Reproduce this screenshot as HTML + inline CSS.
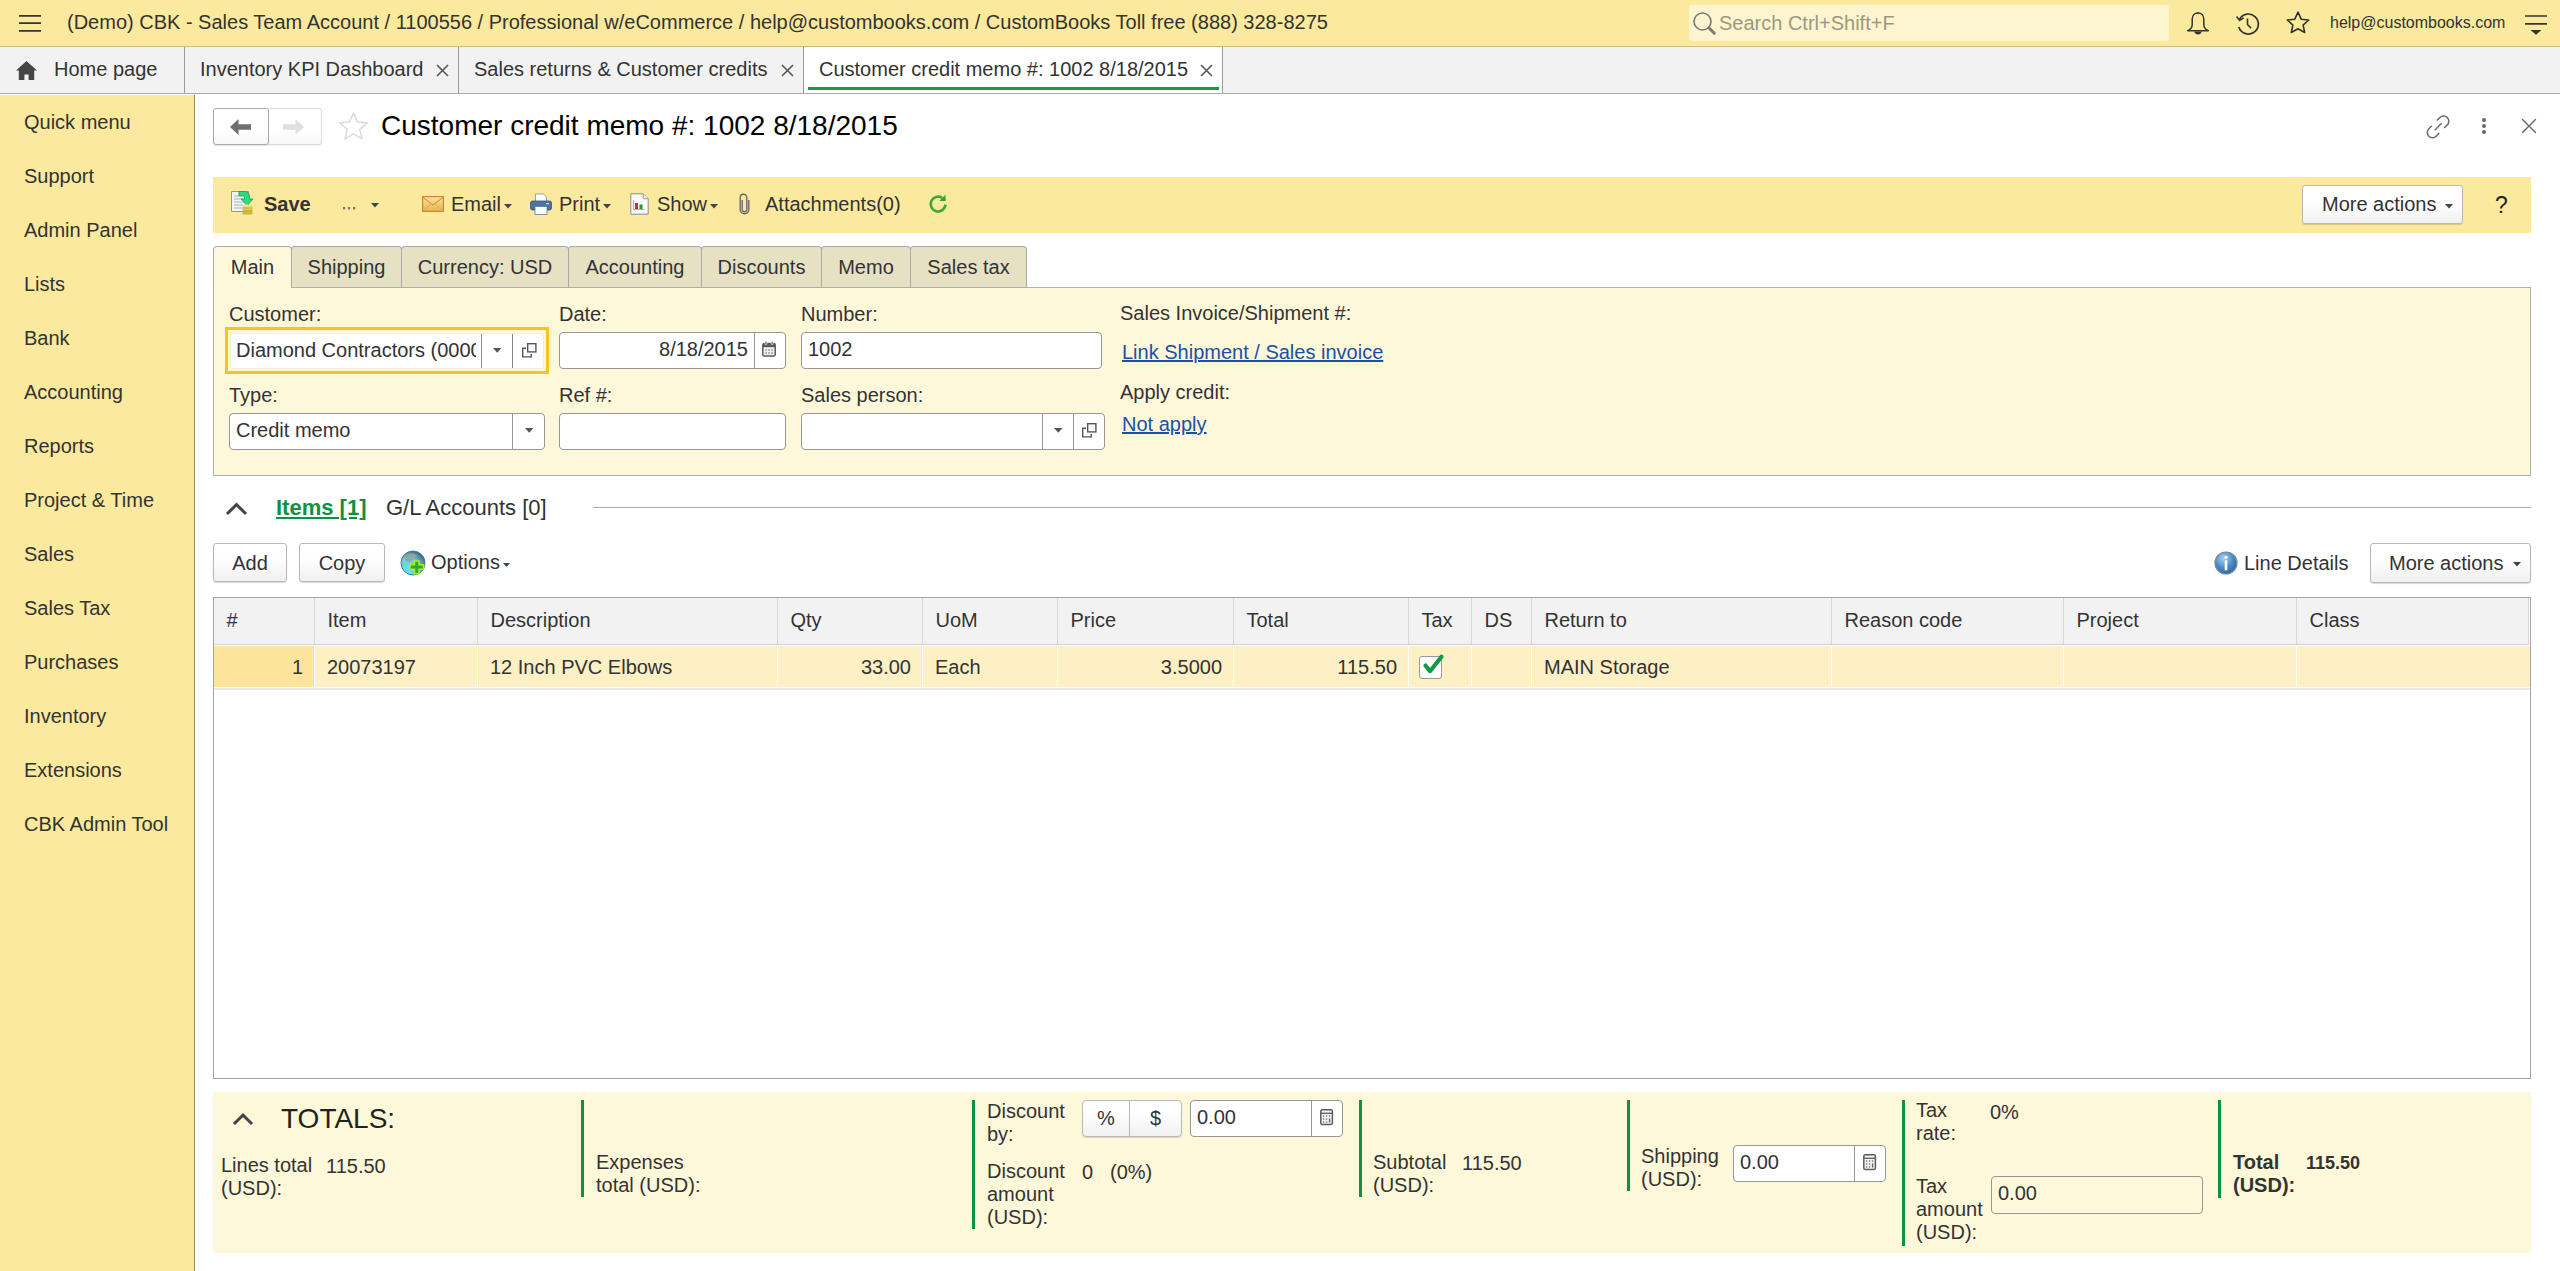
<!DOCTYPE html>
<html><head><meta charset="utf-8">
<style>
*{box-sizing:border-box;margin:0;padding:0}
html,body{width:2560px;height:1271px;overflow:hidden;background:#fff;font-family:"Liberation Sans",sans-serif;font-size:20px;color:#333}
.a{position:absolute;white-space:nowrap}
#top{position:absolute;left:0;top:0;width:2560px;height:47px;background:#fbea9e;border-bottom:1px solid #c9bb7e}
#tabs{position:absolute;left:0;top:47px;width:2560px;height:47px;background:#f2f2f2;border-bottom:1px solid #a9a9a9}
#side{position:absolute;left:0;top:95px;width:195px;height:1176px;background:#fbea9e;border-right:1px solid #948e60}
.side-item{position:absolute;left:24px;font-size:20px;color:#333;line-height:24px}
.ttab{position:absolute;top:0;height:46px;border-right:1px solid #9a9a9a;line-height:45px;font-size:20px;color:#333}
.x{font-size:22px;color:#555}
#toolbar{position:absolute;left:213px;top:177px;width:2318px;height:56px;background:#fbea9e}
.ftab{position:absolute;top:246px;height:41px;background:#e6e1c3;border:1px solid #a9a9a9;border-bottom:none;border-radius:4px 4px 0 0;line-height:41px;font-size:20px;color:#333;text-align:center}
#form{position:absolute;left:213px;top:287px;width:2318px;height:189px;background:#fef8da;border:1px solid #b0b0b0}
.lbl{position:absolute;font-size:20px;color:#333;line-height:24px}
.inp{position:absolute;background:#fff;border:1px solid #979797;border-radius:4px;height:37px;line-height:33px;font-size:20px;color:#333}
.sep{position:absolute;top:0;width:1px;height:100%;background:#979797}
.btn{position:absolute;background:linear-gradient(#fff 35%,#f0f0f0);border:1px solid #b8b8b8;border-radius:3px;box-shadow:0 1px 1px rgba(0,0,0,.15);font-size:20px;color:#333;text-align:center}
#grid{position:absolute;left:213px;top:597px;width:2318px;height:482px;border:1px solid #a6a6a6;background:#fff}
.th{position:absolute;top:0;height:47px;background:#f2f2f2;border-right:1px solid #d6d6d6;border-bottom:1px solid #d0d0d0;box-shadow:1px 0 0 #fff,0 1px 0 #fff;line-height:45px;padding-left:12.5px;font-size:20px;color:#333}
.td{position:absolute;top:48px;height:41px;background:#fdf0c5;border-right:1px solid #fff;line-height:42px;font-size:20px;color:#333}
#totals{position:absolute;left:213px;top:1092px;width:2318px;height:161px;background:#fef8da}
.gl{position:absolute;width:3px;background:#0f9142}
.tl{position:absolute;font-size:20px;color:#333;line-height:23px}
</style></head><body>

<!-- TOP BAR -->
<div id="top">
  <svg class="a" style="left:19px;top:14px" width="22" height="19" viewBox="0 0 22 19"><path d="M0 1.8h22M0 9.2h22M0 16.9h22" stroke="#333" stroke-width="1.7"/></svg>
  <div class="a" style="left:67px;top:10px;font-size:20px;color:#333;line-height:24px">(Demo) CBK - Sales Team Account / 1100556 / Professional w/eCommerce / help@custombooks.com / CustomBooks Toll free (888) 328-8275</div>
  <div class="a" style="left:1689px;top:5px;width:480px;height:36px;background:#fdf5cf;border-radius:3px"></div>
  <div class="a" style="left:1719px;font-size:20px;color:#9e9880;line-height:24px;top:11px">Search Ctrl+Shift+F</div>
  
  <svg class="a" style="left:1692px;top:11px" width="26" height="26" viewBox="0 0 26 26"><circle cx="10.5" cy="10.5" r="8.5" fill="none" stroke="#7e7b6e" stroke-width="1.6"/><path d="M16.8 16.8l5.5 5.5" stroke="#7e7b6e" stroke-width="3" stroke-linecap="round"/></svg>
  <svg class="a" style="left:2185px;top:10px" width="26" height="28" viewBox="0 0 26 28"><path d="M13 3c-3.6 0-5.8 2.6-5.8 6.3v5.5c0 2.8-1.5 4.5-4.5 5.9h20.6c-3-1.4-4.5-3.1-4.5-5.9V9.3C18.8 5.6 16.6 3 13 3z" fill="none" stroke="#333" stroke-width="1.5" stroke-linejoin="round"/><path d="M13 2v1.5" stroke="#333" stroke-width="1.5"/><path d="M9.2 21.5h7.6c-.6 2-1.9 3-3.8 3s-3.2-1-3.8-3z" fill="#333"/></svg>
  <svg class="a" style="left:2235px;top:11px" width="26" height="26" viewBox="0 0 26 26"><path d="M4.6 8.2A10 10 0 1 1 3.8 16" fill="none" stroke="#333" stroke-width="1.7"/><path d="M1.6 5.6l3 3.8 4-2.6" fill="none" stroke="#333" stroke-width="1.6"/><path d="M12.5 7.5v6l3.6 3.6" fill="none" stroke="#333" stroke-width="1.6"/></svg>
  <svg class="a" style="left:2285px;top:10px" width="26" height="26" viewBox="0 0 26 26"><path d="M13 2.2l3.2 7 7.5.8-5.6 5.1 1.6 7.4L13 18.7l-6.7 3.8 1.6-7.4L2.3 10l7.5-.8z" fill="none" stroke="#333" stroke-width="1.6" stroke-linejoin="round"/></svg>
  <div class="a" style="left:2330px;top:12px;font-size:16px;color:#333;line-height:22px">help@custombooks.com</div>
  <svg class="a" style="left:2525px;top:14px" width="22" height="22" viewBox="0 0 22 22"><path d="M0 2h22M0 9.8h22" stroke="#333" stroke-width="1.7"/><path d="M5.5 16h11l-5.5 4.8z" fill="#333"/></svg>
</div>

<!-- TAB BAR -->
<div id="tabs">
  <div class="ttab" style="left:0;width:185px"><svg class="a" style="left:16px;top:14px" width="21" height="19" viewBox="0 0 21 19"><path d="M10.5 0L0 9.5h2.8V19h5.6v-5.5h4.2V19h5.6V9.5H21z" fill="#454545"/></svg><span class="a" style="left:54px">Home page</span></div>
  <div class="ttab" style="left:185px;width:274px"><span class="a" style="left:15px">Inventory KPI Dashboard</span><svg class="a" style="left:251px;top:17px" width="13" height="13" viewBox="0 0 13 13"><path d="M1 1l11 11M12 1L1 12" stroke="#555" stroke-width="1.6"/></svg></div>
  <div class="ttab" style="left:459px;width:345px"><span class="a" style="left:15px">Sales returns &amp; Customer credits</span><svg class="a" style="left:322px;top:17px" width="13" height="13" viewBox="0 0 13 13"><path d="M1 1l11 11M12 1L1 12" stroke="#555" stroke-width="1.6"/></svg></div>
  <div class="ttab" style="left:804px;width:419px;background:#fff"><span class="a" style="left:15px">Customer credit memo #: 1002 8/18/2015</span><svg class="a" style="left:396px;top:17px" width="13" height="13" viewBox="0 0 13 13"><path d="M1 1l11 11M12 1L1 12" stroke="#555" stroke-width="1.6"/></svg>
    <div class="a" style="left:4px;top:40px;width:411px;height:3px;background:#0e9c44"></div></div>
</div>

<!-- SIDEBAR -->
<div id="side">
  <div class="side-item" style="top:15px">Quick menu</div>
  <div class="side-item" style="top:69px">Support</div>
  <div class="side-item" style="top:123px">Admin Panel</div>
  <div class="side-item" style="top:177px">Lists</div>
  <div class="side-item" style="top:231px">Bank</div>
  <div class="side-item" style="top:285px">Accounting</div>
  <div class="side-item" style="top:339px">Reports</div>
  <div class="side-item" style="top:393px">Project &amp; Time</div>
  <div class="side-item" style="top:447px">Sales</div>
  <div class="side-item" style="top:501px">Sales Tax</div>
  <div class="side-item" style="top:555px">Purchases</div>
  <div class="side-item" style="top:609px">Inventory</div>
  <div class="side-item" style="top:663px">Extensions</div>
  <div class="side-item" style="top:717px">CBK Admin Tool</div>
</div>


<!-- NAV -->
<div class="a" style="left:268px;top:108px;width:54px;height:37px;background:linear-gradient(#fff 60%,#f8f8f8);border:1px solid #dcdcdc;border-left:none;border-radius:0 3px 3px 0;box-shadow:0 1px 1px rgba(0,0,0,.06)"></div>
<div class="a" style="left:213px;top:108px;width:56px;height:37px;background:linear-gradient(#fff 60%,#f6f6f6);border:1px solid #aaa;border-radius:3px;box-shadow:0 1px 1px rgba(0,0,0,.12)"></div>
<svg class="a" style="left:230px;top:118px" width="22" height="18" viewBox="0 0 22 18"><path d="M0 9l8.5-8v5.3H21v5.4H8.5V17z" fill="#6f6f6f"/></svg>
<svg class="a" style="left:283px;top:118px" width="22" height="18" viewBox="0 0 22 18"><path d="M21 9l-8.5-8v5.3H0v5.4h12.5V17z" fill="#e0e0e0"/></svg>
<svg class="a" style="left:338px;top:111px" width="31" height="31" viewBox="0 0 31 31"><path d="M15.5 2.2l4 8.8 9.6.9-7.3 6.5 2.2 9.5-8.5-5-8.5 5 2.2-9.5L1.9 11.9l9.6-.9z" fill="none" stroke="#dcdcdc" stroke-width="1.6" stroke-linejoin="round"/></svg>
<!-- right window icons -->
<svg class="a" style="left:2424px;top:112px" width="28" height="28" viewBox="0 0 28 28"><g fill="none" stroke="#6a6a6a" stroke-width="1.5"><path d="M10.7 18.3L17.6 11.25"/><path d="M12.88 8.56L15.92 5.52A5.2 5.2 0 0 1 23.28 12.88L20.24 15.92"/><path d="M15.22 21.14L12.18 24.18A5.2 5.2 0 0 1 4.82 16.82L7.86 13.78"/></g></svg>
<svg class="a" style="left:2480px;top:116px" width="8" height="20" viewBox="0 0 8 20"><circle cx="4" cy="4" r="2" fill="#666"/><circle cx="4" cy="10" r="2" fill="#666"/><circle cx="4" cy="16" r="2" fill="#666"/></svg>
<svg class="a" style="left:2521px;top:118px" width="16" height="16" viewBox="0 0 16 16"><path d="M1.5 1.5l13 13M14.5 1.5l-13 13" stroke="#666" stroke-width="1.4" stroke-linecap="round"/></svg>
<!-- TITLE -->
<div class="a" style="left:381px;top:110px;font-size:28px;color:#000;line-height:32px">Customer credit memo #: 1002 8/18/2015</div>

<!-- TOOLBAR -->
<div id="toolbar">
  <svg class="a" style="left:17px;top:13px" width="28" height="26" viewBox="0 0 28 26"><defs><linearGradient id="cg" x1="0" x2="0" y1="0" y2="1"><stop offset="0" stop-color="#f4ec90"/><stop offset="1" stop-color="#c9b030"/></linearGradient></defs><path d="M1.5 1.5h17v20h-17z" fill="#f2f4f6" stroke="#8896a4"/><path d="M4 6h8M4 9h9M4 12h9M4 15h9M4 18h8" stroke="#a6b4c0" stroke-width="1"/><path d="M9 1.5h5c3.5 0 5.5 2 5.5 5.5v2H23l-6 6.5-6-6.5h3.5V7c0-.8-.4-1.2-1.2-1.2H9z" fill="#2edb80" stroke="#17a858" stroke-width=".9"/><rect x="12.5" y="14.5" width="10" height="10" rx="1" fill="url(#cg)"/><path d="M12.5 18h10M12.5 21h10" stroke="#b79d20" stroke-width=".8"/></svg>
  <div class="a" style="left:51px;top:15px;font-weight:bold;font-size:20px;color:#333;line-height:24px">Save</div>
  <svg class="a" style="left:130px;top:30px" width="14" height="4"><rect x="0" y="0" width="2.2" height="2.4" fill="#777"/><rect x="5" y="0" width="2.2" height="2.4" fill="#777"/><rect x="10" y="0" width="2.2" height="2.4" fill="#777"/></svg>
  <svg class="a" style="left:158px;top:26px" width="9" height="5"><path d="M0 0h8l-4 4.5z" fill="#444"/></svg>
  <svg class="a" style="left:209px;top:19px" width="22" height="16" viewBox="0 0 22 16"><defs><linearGradient id="eg" x1="0" x2="0" y1="0" y2="1"><stop offset="0" stop-color="#fbe2a0"/><stop offset="1" stop-color="#e8b34e"/></linearGradient></defs><rect x=".6" y=".6" width="20.8" height="14.8" fill="url(#eg)" stroke="#c88a2a" stroke-width="1.2"/><path d="M1 1.5l10 7.5 10-7.5" fill="none" stroke="#c88a2a" stroke-width="1"/><path d="M1 15l7.5-6.5M21 15l-7.5-6.5" stroke="#e0a848" stroke-width=".8"/></svg>
  <div class="a" style="left:238px;top:15px;font-size:20px;color:#333;line-height:24px">Email</div>
  <svg class="a" style="left:291px;top:27px" width="9" height="5"><path d="M0 0h8l-4 4.5z" fill="#444"/></svg>
  <svg class="a" style="left:317px;top:16px" width="22" height="22" viewBox="0 0 22 22"><path d="M5.5 1h8l3 3v5h-11z" fill="#fff" stroke="#7b8fa5" stroke-width=".8"/><rect x=".5" y="8" width="21" height="9" rx="2" fill="#4d73a3" stroke="#2f5482" stroke-width=".8"/><rect x="16" y="10" width="3" height="1.2" fill="#c8d8ea"/><path d="M5 13.5h12v8H5z" fill="#fff" stroke="#5a7696" stroke-width=".8"/></svg>
  <div class="a" style="left:346px;top:15px;font-size:20px;color:#333;line-height:24px">Print</div>
  <svg class="a" style="left:390px;top:27px" width="9" height="5"><path d="M0 0h8l-4 4.5z" fill="#444"/></svg>
  <svg class="a" style="left:417px;top:16px" width="19" height="22" viewBox="0 0 19 22"><path d="M.8 .8h12.5l4.9 4.9v15.5H.8z" fill="#fafafa" stroke="#8c8c8c" stroke-width="1"/><path d="M13.3 .8v4.9h4.9" fill="#e8e8e8" stroke="#8c8c8c" stroke-width=".8"/><path d="M3.5 7v9.5h11" fill="none" stroke="#9a9a9a" stroke-width=".8"/><rect x="5" y="10" width="3" height="6" fill="#e8261c"/><rect x="9.5" y="11.5" width="3" height="4.5" fill="#1ea030"/></svg>
  <div class="a" style="left:444px;top:15px;font-size:20px;color:#333;line-height:24px">Show</div>
  <svg class="a" style="left:497px;top:27px" width="9" height="5"><path d="M0 0h8l-4 4.5z" fill="#444"/></svg>
  <svg class="a" style="left:526px;top:16px" width="11" height="22" viewBox="0 0 11 22"><path d="M3.2 7v9.5a2.3 2.3 0 0 0 4.6 0V4.5a3.3 3.3 0 0 0-6.6 0v12a4.3 4.3 0 0 0 8.6 0V7" fill="none" stroke="#6a6a6a" stroke-width="1.4"/></svg>
  <div class="a" style="left:552px;top:15px;font-size:20px;color:#333;line-height:24px">Attachments(0)</div>
  <svg class="a" style="left:715px;top:17px" width="22" height="22" viewBox="0 0 22 22"><path d="M17.47 10.74A7.4 7.4 0 1 1 14.2 3.9" fill="none" stroke="#3daa38" stroke-width="2.7"/><path d="M11.4 6.9h6.3L17.4 .8z" fill="#2ea52a"/></svg>
  <div class="btn" style="left:2089px;top:8px;width:161px;height:39px;line-height:36px;text-align:left;padding-left:19px;background:linear-gradient(#fff 40%,#f1f1f1)">More actions<svg class="a" style="left:142px;top:18px" width="9" height="5"><path d="M0 0h8l-4 4.5z" fill="#444"/></svg></div>
  <div class="a" style="left:2282px;top:15px;font-size:23px;color:#222;line-height:26px">?</div>
</div>

<!-- FORM -->
<div id="form">
  <div class="lbl" style="left:15px;top:14px">Customer:</div>
  <div class="a" style="left:11px;top:39px;width:324px;height:47px;border:3px solid #f8c31f"></div>
  <div class="inp" style="left:16px;top:45px;width:314px;height:36px;border:1px solid #f6efcf;border-radius:3px"><span class="a" style="left:5px;top:0;width:240px;overflow:hidden">Diamond Contractors (000001)</span>
    <div class="sep" style="left:250px;background:#888"></div><div class="sep" style="left:281px;background:#888"></div>
    <svg class="a" style="left:262px;top:14px" width="9" height="5"><path d="M0 0h8.5l-4.25 4.8z" fill="#555"/></svg>
    <svg class="a" style="left:291px;top:9px" width="15" height="15" viewBox="0 0 15 15"><rect x="5.7" y=".7" width="8.2" height="8.2" fill="none" stroke="#555" stroke-width="1.4"/><path d="M4 5.2H.7v8.7h8.6v-3" fill="none" stroke="#555" stroke-width="1.4"/></svg>
  </div>
  <div class="lbl" style="left:345px;top:14px">Date:</div>
  <div class="inp" style="left:345px;top:44px;width:227px"><span class="a" style="right:37px;top:0">8/18/2015</span>
    <div class="sep" style="left:194px"></div>
    <svg class="a" style="left:202px;top:8px" width="14" height="16" viewBox="0 0 14 16"><rect x=".8" y="2.6" width="12.4" height="12.4" rx="1.6" fill="#f0f0f0" stroke="#5a5a5a" stroke-width="1.5"/><rect x=".8" y="2.6" width="12.4" height="3.6" fill="#5a5a5a"/><rect x="3" y=".2" width="1.8" height="3.4" rx=".9" fill="#5a5a5a" stroke="#fff" stroke-width=".7"/><rect x="9.2" y=".2" width="1.8" height="3.4" rx=".9" fill="#5a5a5a" stroke="#fff" stroke-width=".7"/><g fill="#666"><circle cx="4" cy="9" r=".8"/><circle cx="7" cy="9" r=".8"/><circle cx="10" cy="9" r=".8"/><circle cx="4" cy="12" r=".8"/><circle cx="7" cy="12" r=".8"/><circle cx="10" cy="12" r=".8"/></g></svg>
  </div>
  <div class="lbl" style="left:587px;top:14px">Number:</div>
  <div class="inp" style="left:587px;top:44px;width:301px"><span class="a" style="left:6px;top:0">1002</span></div>
  <div class="lbl" style="left:906px;top:13px">Sales Invoice/Shipment #:</div>
  <a class="a" style="left:908px;top:52px;color:#1a4faa;text-decoration:underline;line-height:24px">Link Shipment / Sales invoice</a>
  <div class="lbl" style="left:15px;top:95px">Type:</div>
  <div class="inp" style="left:15px;top:125px;width:316px"><span class="a" style="left:6px;top:0">Credit memo</span>
    <div class="sep" style="left:282px"></div>
    <svg class="a" style="left:295px;top:14px" width="9" height="5"><path d="M0 0h8.5l-4.25 4.8z" fill="#555"/></svg>
  </div>
  <div class="lbl" style="left:345px;top:95px">Ref #:</div>
  <div class="inp" style="left:345px;top:125px;width:227px"></div>
  <div class="lbl" style="left:587px;top:95px">Sales person:</div>
  <div class="inp" style="left:587px;top:125px;width:304px">
    <div class="sep" style="left:240px"></div><div class="sep" style="left:271px"></div>
    <svg class="a" style="left:252px;top:14px" width="9" height="5"><path d="M0 0h8.5l-4.25 4.8z" fill="#555"/></svg>
    <svg class="a" style="left:280px;top:9px" width="15" height="15" viewBox="0 0 15 15"><rect x="5.7" y=".7" width="8.2" height="8.2" fill="none" stroke="#555" stroke-width="1.4"/><path d="M4 5.2H.7v8.7h8.6v-3" fill="none" stroke="#555" stroke-width="1.4"/></svg>
  </div>
  <div class="lbl" style="left:906px;top:92px">Apply credit:</div>
  <a class="a" style="left:908px;top:124px;color:#1a4faa;text-decoration:underline;line-height:24px">Not apply</a>
</div>
<!-- FORM TABS -->
<div class="ftab" style="left:213px;width:79px;background:#fef8da;height:42px;z-index:2">Main</div>
<div class="ftab" style="left:291px;width:111px">Shipping</div>
<div class="ftab" style="left:401px;width:168px">Currency: USD</div>
<div class="ftab" style="left:568px;width:134px">Accounting</div>
<div class="ftab" style="left:701px;width:121px">Discounts</div>
<div class="ftab" style="left:821px;width:90px">Memo</div>
<div class="ftab" style="left:910px;width:117px">Sales tax</div>

<!-- ITEMS HEADER -->
<svg class="a" style="left:225px;top:501px" width="23" height="15" viewBox="0 0 23 15"><path d="M2 13L11.5 3.5 21 13" fill="none" stroke="#444" stroke-width="3"/></svg>
<div class="a" style="left:276px;top:495px;font-size:22px;font-weight:bold;color:#0f9142;text-decoration:underline;line-height:26px">Items [1]</div>
<div class="a" style="left:386px;top:495px;font-size:22px;color:#333;line-height:26px">G/L Accounts [0]</div>
<div class="a" style="left:593px;top:507px;width:1938px;height:1px;background:#aaa"></div>
<div class="btn" style="left:213px;top:543px;width:74px;height:39px;line-height:38px">Add</div>
<div class="btn" style="left:299px;top:543px;width:86px;height:39px;line-height:38px">Copy</div>
<svg class="a" style="left:400px;top:550px" width="26" height="26" viewBox="0 0 26 26"><defs><radialGradient id="gl" cx=".3" cy=".75" r=".8"><stop offset="0" stop-color="#5ae6ee"/><stop offset=".55" stop-color="#7cc8d8"/><stop offset="1" stop-color="#3c6c88"/></radialGradient></defs><circle cx="13" cy="13" r="12" fill="url(#gl)" stroke="#4a7890" stroke-width="1"/><path d="M5.5 8c1.5-3 4-4.5 7-4.5 2 .2 3.5 1 4.5 2.5-1 1.5-2.5 1.2-3.5 2.5-.8 1.3-2 3-4 3.2-1.6.2-3-.5-4-1.5z" fill="#8fa898" opacity=".9"/><path d="M14.5 11h4.5v3.8h4.5v4.5H19v4.5h-4.5v-4.5H10v-4.5h4.5z" fill="#2da838" stroke="#a8ec1a" stroke-width="1.6" stroke-linejoin="miter"/></svg>
<div class="a" style="left:431px;top:550px;font-size:20px;color:#333;line-height:24px">Options</div>
<svg class="a" style="left:503px;top:563px" width="8" height="5"><path d="M0 0h7l-3.5 4z" fill="#444"/></svg>
<svg class="a" style="left:2214px;top:551px" width="24" height="24" viewBox="0 0 24 24"><defs><radialGradient id="ig" cx=".4" cy=".3" r=".75"><stop offset="0" stop-color="#a9d2f2"/><stop offset=".55" stop-color="#4a8cc8"/><stop offset="1" stop-color="#2d5f94"/></radialGradient></defs><circle cx="12" cy="12" r="11" fill="url(#ig)" stroke="#7a8a98" stroke-width="1.2"/><circle cx="12" cy="6.3" r="1.6" fill="#fff"/><rect x="10.7" y="9.3" width="2.6" height="10" fill="#fff"/></svg>
<div class="a" style="left:2244px;top:551px;font-size:20px;color:#333;line-height:24px">Line Details</div>
<div class="btn" style="left:2370px;top:543px;width:161px;height:40px;line-height:38px;text-align:left;padding-left:18px">More actions<svg class="a" style="left:142px;top:18px" width="9" height="5"><path d="M0 0h8l-4 4.5z" fill="#444"/></svg></div>
<!-- GRID -->
<div id="grid">
  <div class="th" style="left:0;width:101px">#</div>
  <div class="th" style="left:101px;width:163px">Item</div>
  <div class="th" style="left:264px;width:300px">Description</div>
  <div class="th" style="left:564px;width:145px">Qty</div>
  <div class="th" style="left:709px;width:135px">UoM</div>
  <div class="th" style="left:844px;width:176px">Price</div>
  <div class="th" style="left:1020px;width:175px">Total</div>
  <div class="th" style="left:1195px;width:63px">Tax</div>
  <div class="th" style="left:1258px;width:60px">DS</div>
  <div class="th" style="left:1318px;width:300px">Return to</div>
  <div class="th" style="left:1618px;width:232px">Reason code</div>
  <div class="th" style="left:1850px;width:233px">Project</div>
  <div class="th" style="left:2083px;width:232px">Class</div>
  <div class="td" style="left:0;width:101px;background:#fde49c;text-align:right;padding-right:11px">1</div>
  <div class="td" style="left:101px;width:163px;padding-left:12px">20073197</div>
  <div class="td" style="left:264px;width:300px;padding-left:12px">12 Inch PVC Elbows</div>
  <div class="td" style="left:564px;width:145px;text-align:right;padding-right:11px">33.00</div>
  <div class="td" style="left:709px;width:135px;padding-left:12px">Each</div>
  <div class="td" style="left:844px;width:176px;text-align:right;padding-right:11px">3.5000</div>
  <div class="td" style="left:1020px;width:175px;text-align:right;padding-right:11px">115.50</div>
  <div class="td" style="left:1195px;width:63px"><div class="a" style="left:10px;top:10px;width:23px;height:23px;background:#fff;border:1px solid #999;border-radius:3px"></div><svg class="a" style="left:9px;top:6px" width="28" height="24" viewBox="0 0 28 24"><path d="M7.5 13.5L12 19.2 23.5 4.7" fill="none" stroke="#0b9a45" stroke-width="4.1" stroke-linecap="round" stroke-linejoin="round"/></svg></div>
  <div class="td" style="left:1258px;width:60px"></div>
  <div class="td" style="left:1318px;width:300px;padding-left:12px">MAIN Storage</div>
  <div class="td" style="left:1618px;width:232px"></div>
  <div class="td" style="left:1850px;width:233px"></div>
  <div class="td" style="left:2083px;width:233px;border-right:none"></div>
  <div class="a" style="left:0;top:90px;width:2316px;height:2px;background:#e8e8e8"></div>
</div>

<!-- TOTALS -->
<div id="totals">
  <svg class="a" style="left:19px;top:19px" width="22" height="15" viewBox="0 0 22 15"><path d="M2 13l9-9 9 9" fill="none" stroke="#444" stroke-width="3"/></svg>
  <div class="a" style="left:68px;top:11px;font-size:28px;color:#222;line-height:32px">TOTALS:</div>
  <div class="tl" style="left:8px;top:62px">Lines total<br>(USD):</div>
  <div class="tl" style="left:113px;top:63px">115.50</div>
  <div class="gl" style="left:368px;top:8px;height:97px"></div>
  <div class="tl" style="left:383px;top:59px">Expenses<br>total (USD):</div>
  <div class="gl" style="left:759px;top:8px;height:129px"></div>
  <div class="tl" style="left:774px;top:8px">Discount<br>by:</div>
  <div class="btn" style="left:869px;top:8px;width:100px;height:37px;line-height:35px;border-radius:4px;text-align:left"><span class="a" style="left:14px">%</span><div class="sep" style="left:46px;background:#b8b8b8"></div><span class="a" style="left:67px">$</span></div>
  <div class="inp" style="left:977px;top:8px;width:153px;height:37px"><span class="a" style="left:6px;top:0">0.00</span><div class="sep" style="left:120px"></div>
    <svg class="a" style="left:129px;top:8px" width="14" height="17" viewBox="0 0 14 17"><rect x=".8" y=".8" width="11.6" height="14.8" rx="1.6" fill="#f2f2f2" stroke="#5c5c5c" stroke-width="1.5"/><path d="M1 4.3h11.2" stroke="#5c5c5c" stroke-width="1.3"/><g fill="#6a6a6a"><circle cx="3.6" cy="7" r=".8"/><circle cx="6.6" cy="7" r=".8"/><circle cx="9.6" cy="7" r=".8"/><circle cx="3.6" cy="10" r=".8"/><circle cx="6.6" cy="10" r=".8"/><circle cx="3.6" cy="13" r=".8"/><circle cx="6.6" cy="13" r=".8"/><rect x="8.9" y="9.2" width="1.4" height="4.6" rx=".7"/></g></svg></div>
  <div class="tl" style="left:774px;top:68px">Discount<br>amount<br>(USD):</div>
  <div class="tl" style="left:869px;top:69px">0</div>
  <div class="tl" style="left:897px;top:69px">(0%)</div>
  <div class="gl" style="left:1146px;top:8px;height:97px"></div>
  <div class="tl" style="left:1160px;top:59px">Subtotal<br>(USD):</div>
  <div class="tl" style="left:1249px;top:60px">115.50</div>
  <div class="gl" style="left:1414px;top:8px;height:91px"></div>
  <div class="tl" style="left:1428px;top:53px">Shipping<br>(USD):</div>
  <div class="inp" style="left:1520px;top:53px;width:153px;height:37px"><span class="a" style="left:6px;top:0">0.00</span><div class="sep" style="left:120px"></div>
    <svg class="a" style="left:129px;top:8px" width="14" height="17" viewBox="0 0 14 17"><rect x=".8" y=".8" width="11.6" height="14.8" rx="1.6" fill="#f2f2f2" stroke="#5c5c5c" stroke-width="1.5"/><path d="M1 4.3h11.2" stroke="#5c5c5c" stroke-width="1.3"/><g fill="#6a6a6a"><circle cx="3.6" cy="7" r=".8"/><circle cx="6.6" cy="7" r=".8"/><circle cx="9.6" cy="7" r=".8"/><circle cx="3.6" cy="10" r=".8"/><circle cx="6.6" cy="10" r=".8"/><circle cx="3.6" cy="13" r=".8"/><circle cx="6.6" cy="13" r=".8"/><rect x="8.9" y="9.2" width="1.4" height="4.6" rx=".7"/></g></svg></div>
  <div class="gl" style="left:1689px;top:8px;height:146px"></div>
  <div class="tl" style="left:1703px;top:7px">Tax<br>rate:</div>
  <div class="tl" style="left:1777px;top:9px">0%</div>
  <div class="tl" style="left:1703px;top:83px">Tax<br>amount<br>(USD):</div>
  <div class="inp" style="left:1778px;top:84px;width:212px;height:38px;background:#fef8da"><span class="a" style="left:6px;top:0">0.00</span></div>
  <div class="gl" style="left:2005px;top:8px;height:98px"></div>
  <div class="tl" style="left:2020px;top:59px;font-weight:bold">Total<br>(USD):</div>
  <div class="tl" style="left:2093px;top:60px;font-weight:bold;font-size:18px">115.50</div>
</div>

</body></html>
